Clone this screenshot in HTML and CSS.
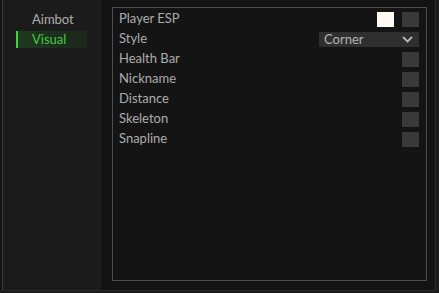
FILE: index.html
```html
<!DOCTYPE html>
<html>
<head>
<meta charset="utf-8">
<link rel="stylesheet" href="styles.css">
</head>
<body>
<div class="frame">
  <nav class="sidebar">
    <div class="tab">Aimbot</div>
    <div class="tab active">Visual</div>
  </nav>
  <main class="main">
    <section class="panel">
      <div class="row">
        <span class="label">Player ESP</span>
        <div class="controls">
          <span class="swatch"></span>
          <span class="check"></span>
        </div>
      </div>
      <div class="row">
        <span class="label">Style</span>
        <div class="combo">
          <span>Corner</span>
          <svg class="chev" width="11" height="7" viewBox="0 0 11 7"><path d="M1 1 L5.5 5.5 L10 1" fill="none" stroke="#b8b8b8" stroke-width="1.8"/></svg>
        </div>
      </div>
      <div class="row"><span class="label">Health Bar</span><span class="check"></span></div>
      <div class="row"><span class="label">Nickname</span><span class="check"></span></div>
      <div class="row"><span class="label">Distance</span><span class="check"></span></div>
      <div class="row"><span class="label">Skeleton</span><span class="check"></span></div>
      <div class="row"><span class="label">Snapline</span><span class="check"></span></div>
    </section>
  </main>
</div>
</body>
</html>
```
FILE: styles.css
```css
html, body {
  margin: 0;
  padding: 0;
  background: #1a1a1a;
  font-family: Lato, "Open Sans", sans-serif;
  font-size: 13px;
}
.frame {
  display: flex;
  width: 436px;
  height: 291px;
  box-sizing: border-box;
  background: #131313;
  padding-left: 2px;
  border-right: 1px solid #2c2c2c;
  border-bottom: 1px solid #2a2a30;
}
.sidebar {
  width: 98px;
  background: #1b1b1b;
  border-left: 1px solid #3a3a3a;
  padding-top: 10px;
  display: flex;
  flex-direction: column;
}
.tab {
  height: 19px;
  line-height: 19px;
  margin-left: 13px;
  width: 71px;
  padding-left: 16px;
  box-sizing: border-box;
  color: #adadad;
}
.tab.active {
  margin-top: 2px;
  height: 17px;
  line-height: 16px;
  color: #48c648;
  border-left: 2px solid #3fd43f;
  padding-left: 14px;
  background: linear-gradient(90deg, #1e3a1e, #1a2e1a 60%, #1d261d);
}
.main {
  flex: 1;
  padding: 7px 8px 9px 11px;
  display: flex;
}
.panel {
  flex: 1;
  border: 1px solid #4e4e4e;
  background: #141414;
  padding: 0 7px 0 6px;
  display: flex;
  flex-direction: column;
}
.row {
  height: 20px;
  display: flex;
  align-items: center;
  justify-content: space-between;
}
.label {
  color: #acacac;
}
.controls {
  display: flex;
  gap: 8px;
  margin-top: 3px;
}
.check {
  width: 17px;
  height: 15px;
  background: #393939;
  margin-top: 3px;
}
.controls .check { margin-top: 0; }
.swatch {
  width: 17px;
  height: 15px;
  background: #fffaf4;
}
.combo {
  width: 100px;
  height: 15px;
  margin-top: 3px;
  background: #2f2f2f;
  color: #b4b4b4;
  display: flex;
  align-items: center;
  justify-content: space-between;
  padding: 0 6px 0 5px;
  box-sizing: border-box;
  line-height: 15px;
}
.chev { display: block; }
```
